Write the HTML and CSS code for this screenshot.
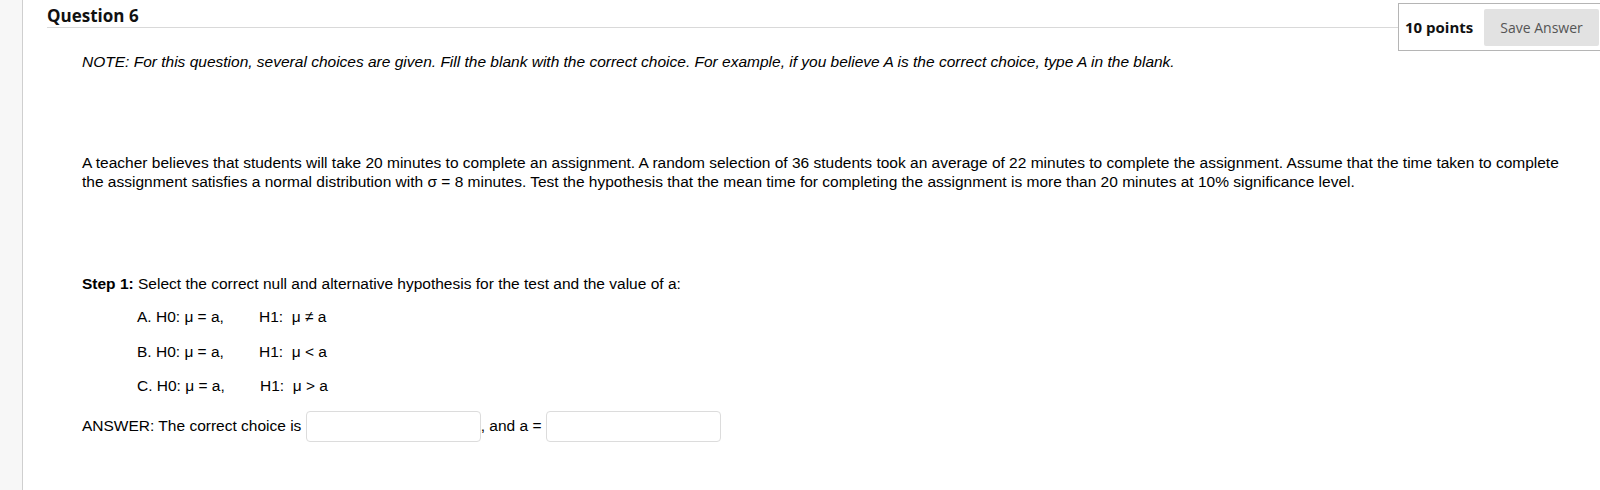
FILE: index.html
```html
<!DOCTYPE html>
<html>
<head>
<meta charset="utf-8">
<link rel="stylesheet" href="styles.css">
</head>
<body>
<div class="page">
  <aside class="side"></aside>
  <main class="main">
    <header class="qhead">
      <div class="qtitle"><h2>Question 6</h2></div>
      <div class="points">
        <span class="pts">10 points</span>
        <button class="save">Save Answer</button>
      </div>
    </header>
    <div class="content">
      <p class="note">NOTE: For this question, several choices are given. Fill the blank with the correct choice. For example, if you believe A is the correct choice, type A in the blank.</p>
      <p class="problem">A teacher believes that students will take 20 minutes to complete an assignment. A random selection of 36 students took an average of 22 minutes to complete the assignment. Assume that the time taken to complete the assignment satisfies a normal distribution with σ = 8 minutes. Test the hypothesis that the mean time for completing the assignment is more than 20 minutes at 10% significance level.</p>
      <p class="step"><b>Step 1:</b> Select the correct null and alternative hypothesis for the test and the value of a:</p>
      <div class="options">
        <div class="opt"><span class="h0">A. H0: μ = a,</span><span class="h1">H1:&nbsp; μ ≠ a</span></div>
        <div class="opt"><span class="h0">B. H0: μ = a,</span><span class="h1">H1:&nbsp; μ &lt; a</span></div>
        <div class="opt"><span class="h0">C. H0: μ = a,</span><span class="h1 shift">H1:&nbsp; μ &gt; a</span></div>
      </div>
      <div class="answer">
        <span class="lbl">ANSWER: The correct choice is&nbsp;</span>
        <input class="blank" type="text">
        <span class="lbl">, and a =&nbsp;</span>
        <input class="blank" type="text">
      </div>
    </div>
  </main>
</div>
</body>
</html>
```
FILE: styles.css
```css
html, body {
  margin: 0;
  padding: 0;
  background: #fff;
}
body {
  font-family: "Liberation Sans", Arial, sans-serif;
  color: #000;
}
.page {
  display: flex;
  min-height: 490px;
}
.side {
  width: 22px;
  flex: none;
  background: #f7f7f7;
  border-right: 1px solid #cfcfcf;
}
.main {
  flex: 1;
  padding-left: 24px;
  min-width: 0;
}
.qhead {
  display: flex;
  align-items: flex-start;
  height: 51px;
}
.qtitle {
  flex: 1;
  height: 27px;
  border-bottom: 1px solid #d9d9d9;
}
.qtitle h2 {
  margin: 0;
  font-family: "Open Sans", sans-serif;
  font-weight: 700;
  font-size: 17px;
  line-height: 20px;
  padding-top: 6px;
  color: #111;
}
.points {
  margin-top: 3px;
  height: 48px;
  box-sizing: border-box;
  border: 1px solid #b5b5b5;
  border-right: none;
  display: flex;
  align-items: center;
  padding-left: 6px;
  width: 202px;
}
.pts {
  font-family: "Open Sans", sans-serif;
  font-weight: 700;
  font-size: 15px;
  color: #111;
  width: 79px;
}
.save {
  font-family: "Open Sans", sans-serif;
  font-size: 14px;
  color: #555;
  background: #e2e2e2;
  border: none;
  border-radius: 2px;
  height: 37px;
  width: 115px;
  padding: 0;
  margin-top: 1px;
}
.content {
  padding-left: 35px;
  padding-right: 30px;
  font-size: 15.5px;
  line-height: 19px;
}
.content p {
  margin: 0;
}
.note {
  font-style: italic;
  margin-top: 1px !important;
}
.problem {
  margin-top: 82px !important;
}
.step {
  margin-top: 83px !important;
}
.options {
  padding-left: 55px;
  margin-top: 14px;
  display: flex;
  flex-direction: column;
  gap: 15.5px;
}
.opt {
  display: flex;
}
.h0 {
  width: 122px;
  flex: none;
}
.shift {
  padding-left: 1px;
}
.answer {
  display: flex;
  align-items: center;
  margin-top: 16px;
}
.lbl {
  padding-bottom: 2px;
  line-height: 19px;
  white-space: pre;
}
.blank {
  width: 175px;
  height: 31px;
  box-sizing: border-box;
  border: 1px solid #dcdcdc;
  border-radius: 4px;
  margin: 0;
  padding: 0;
  background: #fff;
}
```
